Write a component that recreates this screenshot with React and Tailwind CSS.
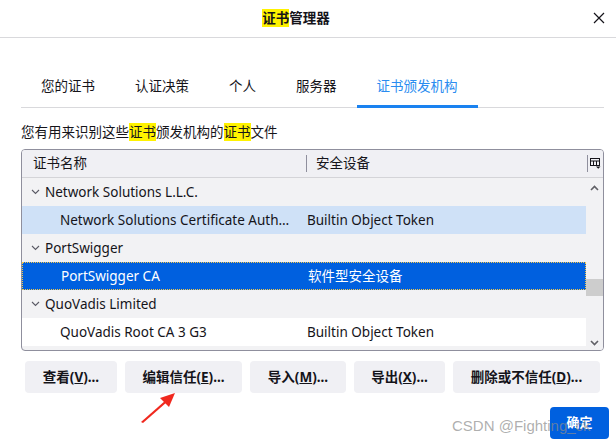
import React from "react";

const Chevron = () => (
  <svg width="9" height="6" viewBox="0 0 9 6" className="shrink-0">
    <path d="M1 1 L4.5 4.5 L8 1" fill="none" stroke="#5b5b66" strokeWidth="1.1" />
  </svg>
);

function GroupRow({ label }) {
  return (
    <div className="h-[28px] flex items-center bg-[#f2f2f4] pl-[9px] gap-[5px] text-[#15141a]">
      <Chevron />
      <span>{label}</span>
    </div>
  );
}

function ChildRow({ name, device, variant }) {
  const base = "h-[28px] flex items-center text-[#15141a]";
  let cls = base + " bg-white";
  if (variant === "light") cls = base + " bg-[#cfe1f7]";
  if (variant === "selected")
    cls = "h-[28px] flex items-center bg-[#0060df] text-white border border-dotted border-[#f5c84a]";
  return (
    <div className={cls}>
      <div className="w-[284px] pl-[38px] whitespace-nowrap overflow-hidden">{name}</div>
      <div className="pl-[1px] whitespace-nowrap">{device}</div>
    </div>
  );
}

function Btn({ w, children }) {
  return (
    <button
      className={
        "h-[32px] rounded-[4px] bg-[#f0f0f4] font-bold text-[13.5px] text-[#15141a] flex items-center justify-center " +
        w
      }
    >
      {children}
    </button>
  );
}

export default function App() {
  return (
    <div className="w-[616px] h-[442px] bg-white relative overflow-hidden font-['Noto_Sans','Noto_Sans_CJK_SC',sans-serif] text-[13.5px] text-[#15141a]">
      {/* Title bar */}
      <div className="h-[38px] border-b border-[#d9d9dc] flex items-center justify-center pr-[24px] relative">
        <span className="font-semibold text-[13.5px] leading-none">
          <span className="bg-[#fff200]">证书</span>管理器
        </span>
        <svg
          width="12"
          height="12"
          viewBox="0 0 12 12"
          className="absolute right-[11px] top-[12px]"
        >
          <path d="M1 1 L11 11 M11 1 L1 11" stroke="#15141a" strokeWidth="1.2" />
        </svg>
      </div>

      <div className="pl-[21px] pr-[12px]">
        {/* Tabs */}
        <div className="mt-[27px] flex border-b border-[#d9d9dc] h-[43px]">
          {["您的证书", "认证决策", "个人", "服务器"].map((t) => (
            <div key={t} className="px-5 flex items-center h-[42px]">
              {t}
            </div>
          ))}
          <div className="px-5 flex items-center h-[43px] text-[#2a8cf0] border-b-[3px] border-[#1a82f0] pt-[2px]">
            证书颁发机构
          </div>
        </div>

        {/* Description */}
        <div className="mt-[15px] h-[18px] leading-[18px]">
          您有用来识别这些<span className="bg-[#fff200]">证书</span>颁发机构的
          <span className="bg-[#fff200]">证书</span>文件
        </div>

        {/* Tree table */}
        <div className="mt-[8px] h-[202px] border border-[#8f8f9d] rounded-[4px] overflow-hidden bg-[#f2f2f4] flex flex-col">
          <div className="h-[28px] shrink-0 flex items-center border-b border-[#d4d4d8] bg-[#f0f0f4]">
            <div className="w-[284px] pl-[11px] flex items-center">证书名称</div>
            <div className="w-px h-[17px] bg-[#8f8f9d]" />
            <div className="flex-1 pl-[9px]">安全设备</div>
            <div className="w-px h-[17px] bg-[#8f8f9d]" />
            <div className="w-[15px] flex justify-center">
              <svg width="11" height="11" viewBox="0 0 11 11">
                <rect x="0.5" y="0.5" width="9" height="7" fill="none" stroke="#15141a" strokeWidth="1" />
                <path d="M0.5 3 H9.5 M3.5 3 V7.5 M6.5 3 V7.5" stroke="#15141a" strokeWidth="1" />
                <path d="M6 8.5 H10.5 L8.25 10.8 Z" fill="#15141a" />
              </svg>
            </div>
          </div>
          <div className="flex flex-1">
            <div className="flex-1 flex flex-col">
              <GroupRow label="Network Solutions L.L.C." />
              <ChildRow
                name="Network Solutions Certificate Auth…"
                device="Builtin Object Token"
                variant="light"
              />
              <GroupRow label="PortSwigger" />
              <ChildRow name="PortSwigger CA" device="软件型安全设备" variant="selected" />
              <GroupRow label="QuoVadis Limited" />
              <ChildRow name="QuoVadis Root CA 3 G3" device="Builtin Object Token" />
            </div>
            <div className="w-[17px] bg-[#f2f2f4] flex flex-col items-center relative">
              <svg width="9" height="6" viewBox="0 0 9 6" className="mt-[7px]">
                <path d="M1 5 L4.5 1.5 L8 5" fill="none" stroke="#606066" strokeWidth="1.6" />
              </svg>
              <div className="absolute left-0 right-0 top-[101px] h-[17px] bg-[#cdcdcd]" />
              <svg width="9" height="6" viewBox="0 0 9 6" className="mt-auto mb-[4px]">
                <path d="M1 1 L4.5 4.5 L8 1" fill="none" stroke="#606066" strokeWidth="1.6" />
              </svg>
            </div>
          </div>
        </div>

        {/* Buttons */}
        <div className="mt-[10px] ml-[4px] flex gap-[8px]">
          <Btn w="w-[92px]">
            查看(<span className="underline">V</span>)...
          </Btn>
          <Btn w="w-[117px]">
            编辑信任(<span className="underline">E</span>)...
          </Btn>
          <Btn w="w-[96px]">
            导入(<span className="underline">M</span>)...
          </Btn>
          <Btn w="w-[91px]">
            导出(<span className="underline">X</span>)...
          </Btn>
          <Btn w="w-[147px]">
            删除或不信任(<span className="underline">D</span>)...
          </Btn>
        </div>
      </div>

      <div className="mt-[14px] flex justify-end pr-[7px]">
        <button className="w-[59px] h-[32px] rounded-[4px] bg-[#0060df] text-white font-bold text-[13px] flex items-center justify-center">
          确定
        </button>
      </div>

      {/* Watermark */}
      <div className="absolute left-[452px] top-[415px] text-[15px] font-['Liberation_Sans',sans-serif] text-[rgba(140,140,140,0.7)] whitespace-nowrap pointer-events-none">
        CSDN @Fighting_ck
      </div>

      {/* Red arrow */}
      <svg
        className="absolute left-[136px] top-[388px] pointer-events-none"
        width="44"
        height="38"
        viewBox="0 0 44 38"
      >
        <path d="M5 34 L30 12 L31 14 L7 35 Z" fill="#f0281e" />
        <path d="M39 5 L24 10 L33 19 Z" fill="#f0281e" />
      </svg>
    </div>
  );
}
